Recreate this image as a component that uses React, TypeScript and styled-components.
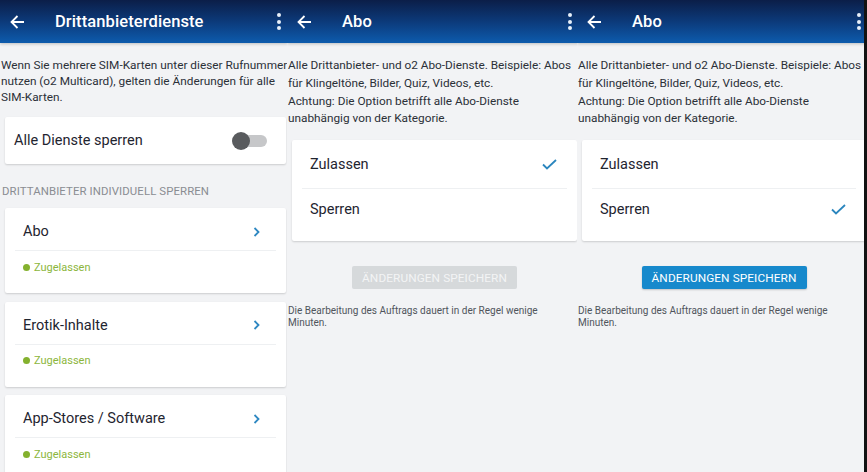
import * as React from 'react';
import styled, { createGlobalStyle } from 'styled-components';

const GlobalStyle = createGlobalStyle`
  html, body {
    margin: 0;
    padding: 0;
    background: #121212;
  }
  body {
    font-family: Roboto, 'Noto Sans', 'Liberation Sans', sans-serif;
    -webkit-font-smoothing: antialiased;
  }
`;

const Screens = styled.div`
  display: flex;
  width: 867px;
  height: 472px;
  background: #121212;
`;

const Screen = styled.div<{ $width: number }>`
  flex: none;
  width: ${p => p.$width}px;
  height: 472px;
  overflow: hidden;
  background: #f2f3f5;
`;

const Device = styled.div<{ $width: number }>`
  width: ${p => p.$width}px;
  height: 100%;
  display: flex;
  flex-direction: column;
  & > * {
    flex-shrink: 0;
  }
`;

const AppBar = styled.header`
  height: 43px;
  display: flex;
  align-items: center;
  padding: 0 7px 0 10px;
  background: linear-gradient(180deg, #0b1e48 0%, #0c3a7a 50%, #0d5bad 100%);
  box-shadow: 0 1px 3px rgba(0, 0, 0, 0.22);
  color: #fff;
`;

const Title = styled.h1`
  flex: 1;
  margin: 0 0 0 30px;
  font-size: 16.5px;
  font-weight: 500;
  letter-spacing: 0.1px;
  color: #fff;
`;

const Kebab = styled.div`
  display: flex;
  flex-direction: column;
  gap: 2.5px;
  span {
    width: 4px;
    height: 4px;
    border-radius: 50%;
    background: #e8f0fa;
  }
`;

const Intro = styled.p<{ $lh: number; $top: number }>`
  margin: 0;
  padding: ${p => p.$top}px 0 0 1px;
  font-size: 11.8px;
  line-height: ${p => p.$lh}px;
  color: #2b3038;
  white-space: nowrap;
`;

const Card = styled.div`
  margin: 0 2px 0 5px;
  background: #fff;
  border-radius: 2px;
  box-shadow: 0 1px 2px rgba(0, 0, 0, 0.16);
`;

const ToggleCard = styled(Card)`
  margin-top: 12px;
  height: 47px;
  display: flex;
  align-items: center;
  justify-content: space-between;
  padding: 0 19px 0 9px;
  font-size: 14.5px;
  color: #1f2530;
`;

const Switch = styled.div`
  position: relative;
  width: 34px;
  height: 12px;
  border-radius: 6px;
  background: #c6c7c9;
  &::after {
    content: '';
    position: absolute;
    left: -1px;
    top: -3px;
    width: 18px;
    height: 18px;
    border-radius: 50%;
    background: #595b5e;
  }
`;

const SectionLabel = styled.div`
  padding: 21px 0 10px 2px;
  font-size: 11.4px;
  line-height: 13px;
  color: #8a8d92;
  letter-spacing: 0.1px;
  white-space: nowrap;
`;

const ServiceList = styled.div`
  display: flex;
  flex-direction: column;
  gap: 8.5px;
`;

const ServiceCard = styled(Card)`
  height: 85px;
  padding: 0 10px;
  flex: none;
`;

const ServiceHead = styled.div`
  height: 43px;
  padding: 5px 16px 0 8px;
  box-sizing: border-box;
  display: flex;
  align-items: center;
  justify-content: space-between;
  border-bottom: 1px solid #eef0f2;
  font-size: 14.5px;
  color: #1f2530;
`;

const Status = styled.div`
  height: 32px;
  padding: 0 8px;
  display: flex;
  align-items: center;
  gap: 4px;
  font-size: 11px;
  color: #8cb63c;
  &::before {
    content: '';
    width: 7px;
    height: 7px;
    border-radius: 50%;
    background: #84b12e;
  }
`;

const OptionCard = styled(Card)`
  margin-top: 12px;
  padding: 0 10px 12px;
`;

const Option = styled.div<{ $height: number; $divider?: boolean }>`
  height: ${p => p.$height}px;
  padding: 0 10px 0 8px;
  display: flex;
  align-items: center;
  justify-content: space-between;
  font-size: 14.5px;
  color: #1f2530;
  border-bottom: ${p => (p.$divider ? '1px solid #eef0f2' : 'none')};
`;

const SaveButton = styled.button<{ $enabled: boolean }>`
  align-self: center;
  margin: 25px 0 0 3px;
  width: 165px;
  height: 23px;
  border: none;
  border-radius: 2px;
  padding: 0;
  font-family: inherit;
  font-size: 11.8px;
  letter-spacing: 0.1px;
  color: ${p => (p.$enabled ? '#fff' : '#f3f4f5')};
  background: ${p => (p.$enabled ? '#1789cc' : '#d6d9db')};
  box-shadow: ${p => (p.$enabled ? '0 1px 2px rgba(0,0,0,0.2)' : 'none')};
`;

const Note = styled.p`
  margin: 16px 0 0 1px;
  font-size: 10px;
  line-height: 11.5px;
  color: #50555c;
  white-space: nowrap;
`;

const BackArrow = () => (
  <svg width="15" height="14" viewBox="0 0 15 14" fill="none">
    <path d="M14 7H1.5M7.5 1L1.5 7l6 6" stroke="#fff" strokeWidth="1.8" />
  </svg>
);

const Chevron = () => (
  <svg width="7" height="10" viewBox="0 0 7 10" fill="none">
    <path d="M1.5 1l4 4-4 4" stroke="#2e88c2" strokeWidth="1.8" />
  </svg>
);

const Check = () => (
  <svg width="15" height="11" viewBox="0 0 15 11" fill="none">
    <path d="M1 5.5l4 4L14 1" stroke="#2b86be" strokeWidth="1.8" />
  </svg>
);

function Header({ title }: { title: string }) {
  return (
    <AppBar>
      <BackArrow />
      <Title>{title}</Title>
      <Kebab>
        <span />
        <span />
        <span />
      </Kebab>
    </AppBar>
  );
}

const services = ['Abo', 'Erotik-Inhalte', 'App-Stores / Software'];

function OverviewScreen() {
  return (
    <Screen $width={287}>
      <Device $width={288}>
        <Header title="Drittanbieterdienste" />
        <Intro $lh={16} $top={14}>
          Wenn Sie mehrere SIM-Karten unter dieser Rufnummer
          <br />
          nutzen (o2 Multicard), gelten die Änderungen für alle
          <br />
          SIM-Karten.
        </Intro>
        <ToggleCard>
          Alle Dienste sperren
          <Switch />
        </ToggleCard>
        <SectionLabel>DRITTANBIETER INDIVIDUELL SPERREN</SectionLabel>
        <ServiceList>
          {services.map(name => (
            <ServiceCard key={name}>
              <ServiceHead>
                {name}
                <Chevron />
              </ServiceHead>
              <Status>Zugelassen</Status>
            </ServiceCard>
          ))}
        </ServiceList>
      </Device>
    </Screen>
  );
}

function AboScreen({
  width,
  device,
  blocked,
}: {
  width: number;
  device: number;
  blocked: boolean;
}) {
  return (
    <Screen $width={width}>
      <Device $width={device}>
        <Header title="Abo" />
        <Intro $lh={17.8} $top={14}>
          Alle Drittanbieter- und o2 Abo-Dienste. Beispiele: Abos
          <br />
          für Klingeltöne, Bilder, Quiz, Videos, etc.
          <br />
          Achtung: Die Option betrifft alle Abo-Dienste
          <br />
          unabhängig von der Kategorie.
        </Intro>
        <OptionCard>
          <Option $height={48} $divider>
            Zulassen
            {!blocked && <Check />}
          </Option>
          <Option $height={40}>
            Sperren
            {blocked && <Check />}
          </Option>
        </OptionCard>
        <SaveButton $enabled={blocked}>ÄNDERUNGEN SPEICHERN</SaveButton>
        <Note>
          Die Bearbeitung des Auftrags dauert in der Regel wenige
          <br />
          Minuten.
        </Note>
      </Device>
    </Screen>
  );
}

export default function App() {
  return (
    <>
      <GlobalStyle />
      <Screens>
        <OverviewScreen />
        <AboScreen width={290} device={292} blocked={false} />
        <AboScreen width={287} device={291} blocked />
      </Screens>
    </>
  );
}
